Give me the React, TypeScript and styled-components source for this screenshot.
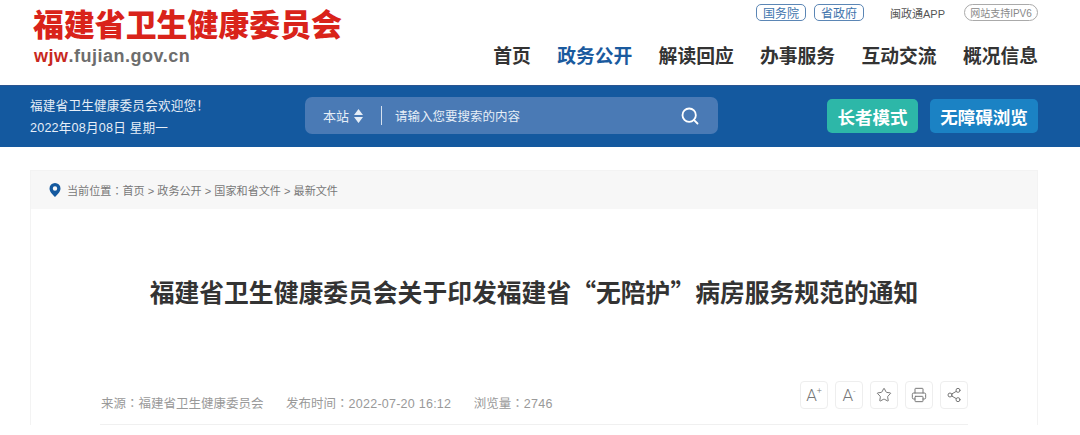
import React from 'react'
import styled, { createGlobalStyle } from 'styled-components'
import { Search, Star, Printer, Share2 } from 'lucide-react'

const GlobalStyle = createGlobalStyle`
  html, body {
    margin: 0;
    padding: 0;
    height: 435px;
    overflow: hidden;
    background: #fff;
    font-family: "Liberation Sans", "Noto Sans CJK SC", sans-serif;
  }
`

const Wrap = styled.div`
  padding: 0 42px 0 30px;
`

const HeaderRow = styled(Wrap)`
  height: 85px;
  display: flex;
  justify-content: space-between;
`

const Logo = styled.div`
  padding: 8px 0 0 3px;
`

const LogoTitle = styled.div`
  font-size: 30.9px;
  line-height: 35px;
  font-weight: 900;
  color: #d9231a;
  white-space: nowrap;
`

const LogoUrl = styled.div`
  margin: 3px 0 0 1px;
  font-size: 18px;
  line-height: 21px;
  font-weight: 700;
  letter-spacing: 0.5px;
  color: #6d6d6d;

  b {
    color: #c8281e;
  }
`

const HeaderRight = styled.div`
  display: flex;
  flex-direction: column;
  align-items: flex-end;
`

const TopLinks = styled.div`
  display: flex;
  align-items: center;
  gap: 8px;
  height: 17px;
  margin-top: 4px;
`

const GovTag = styled.span`
  box-sizing: border-box;
  width: 50px;
  height: 17px;
  border: 1px solid #5b86b5;
  border-radius: 5px;
  display: flex;
  align-items: center;
  justify-content: center;
  font-size: 12px;
  color: #3f74ad;
`

const AppLink = styled.span`
  margin: 0 11px 0 18px;
  font-size: 11px;
  color: #555;
  white-space: nowrap;
`

const Ipv6Tag = styled.span`
  box-sizing: border-box;
  width: 74px;
  height: 17px;
  border: 1px solid #aaa;
  border-radius: 9px;
  display: flex;
  align-items: center;
  justify-content: center;
  font-size: 10px;
  color: #888;
  white-space: nowrap;
`

const Nav = styled.nav`
  display: flex;
  gap: 26.3px;
  margin-top: 22px;
`

const NavItem = styled.a<{ $active?: boolean }>`
  font-size: 18.8px;
  line-height: 28px;
  font-weight: 700;
  color: ${(p) => (p.$active ? '#1a5a9e' : '#333')};
`

const Band = styled.div`
  height: 62px;
  background: #14599f;
  border-top: 1px solid #2a5590;
  box-sizing: border-box;
`

const BandRow = styled(Wrap)`
  height: 61px;
  display: flex;
  align-items: center;
`

const Welcome = styled.div`
  width: 275px;
  font-size: 12.6px;
  letter-spacing: 0.2px;
  line-height: 22px;
  color: #e6eef7;
  white-space: nowrap;
`

const SearchBar = styled.div`
  width: 413px;
  height: 37px;
  margin-bottom: 2px;
  border-radius: 7px;
  background: #4a7ab5;
  display: flex;
  align-items: center;
  color: #e6eef7;
  font-size: 13px;
`

const Scope = styled.div`
  display: flex;
  align-items: center;
  gap: 5px;
  padding-left: 18px;
  width: 58px;
`

const ScopeArrows = styled.svg`
  width: 9px;
  height: 14px;
  fill: #e6eef7;
`

const Divider = styled.div`
  width: 1px;
  height: 19px;
  background: #d5e1ef;
`

const Placeholder = styled.div`
  flex: 1;
  padding-left: 13px;
  font-size: 12.5px;
`

const SearchButton = styled.div`
  display: flex;
  padding-right: 18px;
  color: #fff;
`

const BandButtons = styled.div`
  margin-left: auto;
  margin-bottom: 1px;
  display: flex;
  gap: 12px;
`

const BandButton = styled.div<{ $bg: string; $width: number }>`
  width: ${(p) => p.$width}px;
  height: 34px;
  border-radius: 5px;
  background: ${(p) => p.$bg};
  color: #fff;
  font-size: 17.5px;
  font-weight: 700;
  display: flex;
  align-items: center;
  justify-content: center;
`

const Card = styled.div`
  margin: 23px 42px 0 30px;
  border: 1px solid #f3f3f3;
  border-bottom: 0;
`

const Crumbs = styled.div`
  height: 38px;
  background: #f7f7f7;
  display: flex;
  align-items: center;
  gap: 6px;
  padding-left: 18px;
  font-size: 11.1px;
  color: #777;
  white-space: pre;
`

const PinIcon = styled.svg`
  width: 12px;
  height: 14px;
`

// the colon sits mid-height in the reference, TC glyphs do that
const Colon = styled.span`
  font-family: "Noto Sans CJK TC", sans-serif;
`

const Article = styled.div`
  padding: 0 69px;
`

const Title = styled.h1`
  margin: 62px 0 0;
  text-align: center;
  font-family: "Noto Sans CJK SC", sans-serif;
  font-size: 24.8px;
  line-height: 40px;
  font-weight: 700;
  color: #333;
  white-space: nowrap;
`

const MetaRow = styled.div`
  margin-top: 70px;
  height: 43px;
  display: flex;
  align-items: flex-start;
  justify-content: space-between;
  border-bottom: 1px solid #f0f0f0;
`

const MetaText = styled.div`
  display: flex;
  gap: 22.5px;
  padding: 12px 0 0 1px;
  font-size: 12.5px;
  line-height: 20px;
  color: #999;
  white-space: nowrap;
`

const MetaValue = styled.span`
  letter-spacing: 0.25px;
`

const Tools = styled.div`
  display: flex;
  gap: 7px;
`

const ToolButton = styled.div`
  box-sizing: border-box;
  width: 28px;
  height: 28px;
  border: 1px solid #eee;
  border-radius: 4px;
  display: flex;
  align-items: center;
  justify-content: center;
  color: #777;
  font-family: Roboto, sans-serif;
  font-weight: 300;
  font-size: 17px;

  sup {
    font-size: 9px;
    line-height: 1;
    margin-bottom: 8px;
  }
`

const navItems = ['首页', '政务公开', '解读回应', '办事服务', '互动交流', '概况信息']

export default function App() {
  return (
    <>
      <GlobalStyle />
      <HeaderRow>
        <Logo>
          <LogoTitle>福建省卫生健康委员会</LogoTitle>
          <LogoUrl><b>wjw</b>.fujian.gov.cn</LogoUrl>
        </Logo>
        <HeaderRight>
          <TopLinks>
            <GovTag>国务院</GovTag>
            <GovTag>省政府</GovTag>
            <AppLink>闽政通APP</AppLink>
            <Ipv6Tag>网站支持IPV6</Ipv6Tag>
          </TopLinks>
          <Nav>
            {navItems.map((item, i) => (
              <NavItem key={item} $active={i === 1}>{item}</NavItem>
            ))}
          </Nav>
        </HeaderRight>
      </HeaderRow>
      <Band>
        <BandRow>
          <Welcome>
            福建省卫生健康委员会欢迎您！<br />
            2022年08月08日 星期一
          </Welcome>
          <SearchBar>
            <Scope>
              本站
              <ScopeArrows viewBox="0 0 9 14">
                <path d="M4.5 0 9 6H0zM0 8h9l-4.5 6z" />
              </ScopeArrows>
            </Scope>
            <Divider />
            <Placeholder>请输入您要搜索的内容</Placeholder>
            <SearchButton>
              <Search size={20} strokeWidth={2.2} />
            </SearchButton>
          </SearchBar>
          <BandButtons>
            <BandButton $bg="#2db7a8" $width={91}>长者模式</BandButton>
            <BandButton $bg="#1b82c4" $width={108}>无障碍浏览</BandButton>
          </BandButtons>
        </BandRow>
      </Band>
      <Card>
        <Crumbs>
          <PinIcon viewBox="0 0 12 14">
            <path
              fillRule="evenodd"
              fill="#14599f"
              d="M6 0a5.5 5.5 0 0 1 5.5 5.5C11.500 9 8 12 6 14 4 12 .5 9 .5 5.500A5.500 5.500 0 0 1 6 0zm0 3.300a2.200 2.200 0 1 0 0 4.400 2.200 2.200 0 0 0 0-4.400z"
            />
          </PinIcon>
          <span>当前位置<Colon>：</Colon>首页 &gt; 政务公开 &gt; 国家和省文件 &gt; 最新文件</span>
        </Crumbs>
        <Article>
          <Title>福建省卫生健康委员会关于印发福建省“无陪护”病房服务规范的通知</Title>
          <MetaRow>
            <MetaText>
              <span>来源<Colon>：</Colon>福建省卫生健康委员会</span>
              <span>发布时间<Colon>：</Colon><MetaValue>2022-07-20 16:12</MetaValue></span>
              <span>浏览量<Colon>：</Colon><MetaValue>2746</MetaValue></span>
            </MetaText>
            <Tools>
              <ToolButton>A<sup>+</sup></ToolButton>
              <ToolButton>A<sup>-</sup></ToolButton>
              <ToolButton><Star size={16} strokeWidth={1.5} /></ToolButton>
              <ToolButton><Printer size={16} strokeWidth={1.5} /></ToolButton>
              <ToolButton><Share2 size={16} strokeWidth={1.5} /></ToolButton>
            </Tools>
          </MetaRow>
        </Article>
      </Card>
    </>
  )
}
